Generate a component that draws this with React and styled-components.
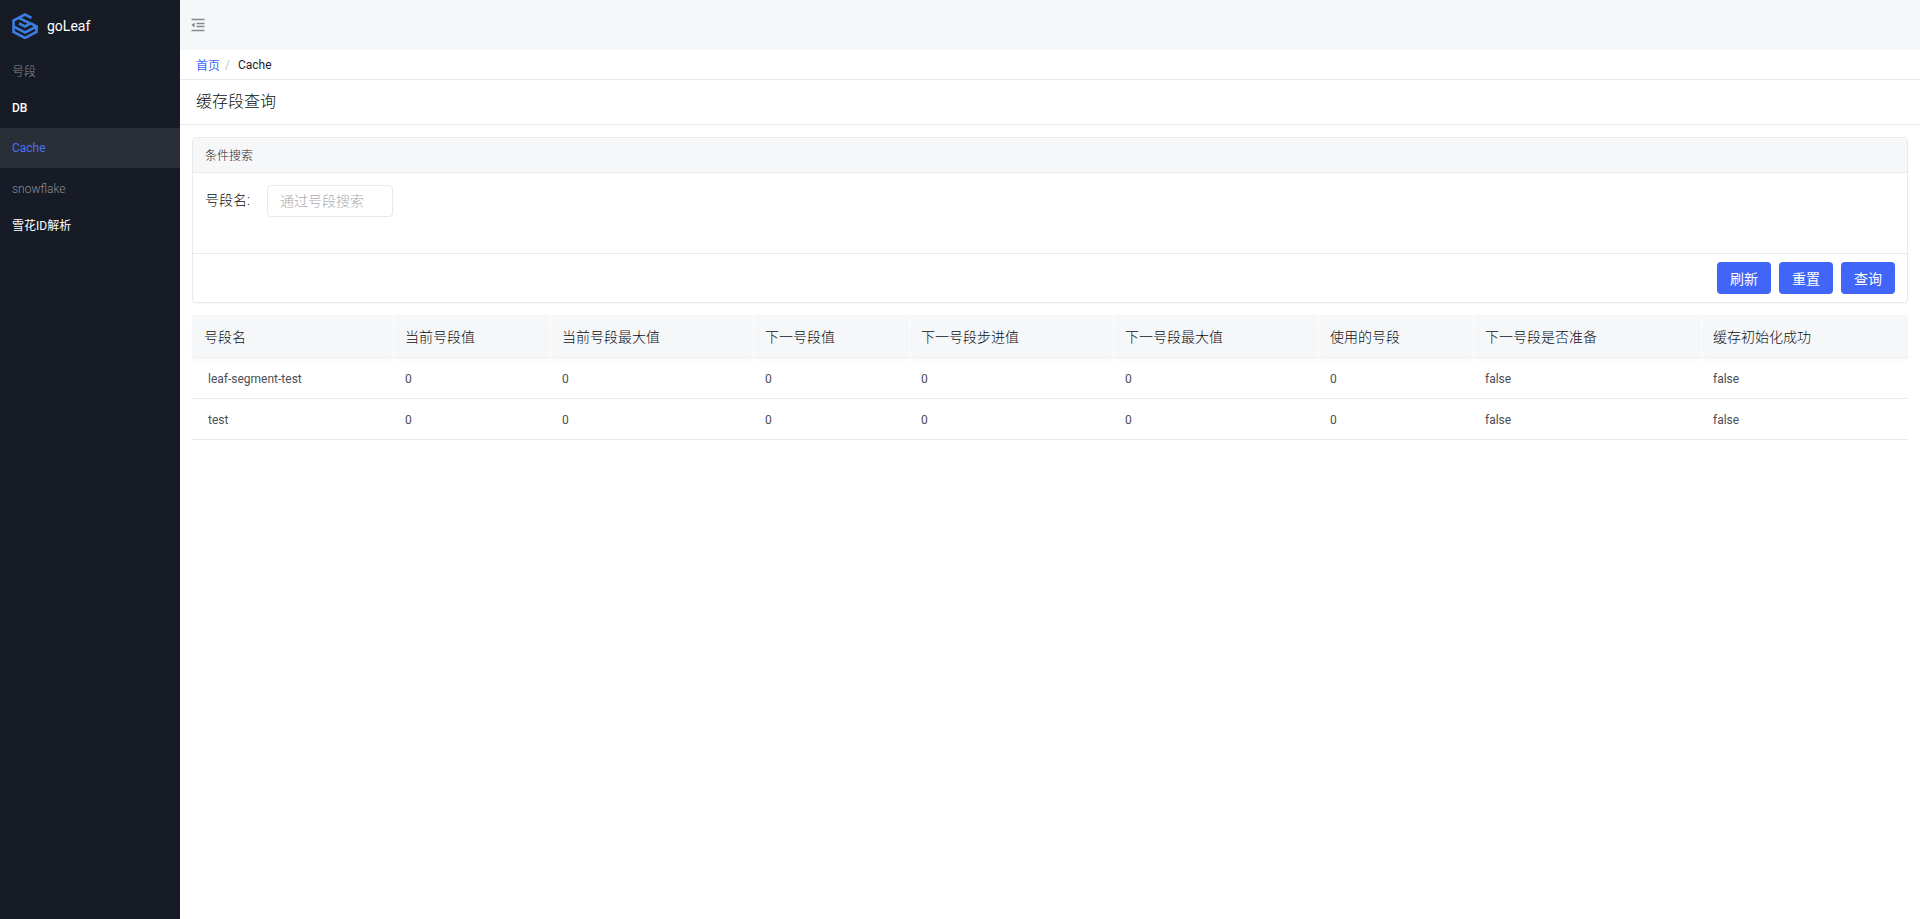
import React from 'react';
import styled, { createGlobalStyle } from 'styled-components';

const Global = createGlobalStyle`
  html, body {
    margin: 0;
    padding: 0;
    background: #fff;
    font-family: Roboto, "Noto Sans CJK SC", sans-serif;
    color: #1f2329;
  }
  * {
    box-sizing: border-box;
  }
`;

const columns = [
  { title: '号段名', width: 202, key: 'name' },
  { title: '当前号段值', width: 157, key: 'cur' },
  { title: '当前号段最大值', width: 203, key: 'curMax' },
  { title: '下一号段值', width: 156, key: 'next' },
  { title: '下一号段步进值', width: 204, key: 'step' },
  { title: '下一号段最大值', width: 205, key: 'nextMax' },
  { title: '使用的号段', width: 155, key: 'pos' },
  { title: '下一号段是否准备', width: 228, key: 'ready' },
  { title: '缓存初始化成功', width: 206, key: 'init' },
];

const rows = [
  { name: 'leaf-segment-test', cur: 0, curMax: 0, next: 0, step: 0, nextMax: 0, pos: 0, ready: 'false', init: 'false' },
  { name: 'test', cur: 0, curMax: 0, next: 0, step: 0, nextMax: 0, pos: 0, ready: 'false', init: 'false' },
];

function Logo() {
  return (
    <svg width="26" height="26" viewBox="0 0 26 26" fill="none" stroke="#3b7de0" strokeWidth="2.6" strokeLinejoin="miter">
      <path d="M1.5 13.5v5.5L13 25l11.5-6v-5.5" />
      <path d="M19 10.5l5.5 3L13 19.5 1.5 13.5V7.5L13 1.5l6.5 3.4" />
      <path d="M7 10.5l6 3 5.5-3L7 5" />
    </svg>
  );
}

function FoldIcon() {
  return (
    <svg width="14" height="14" viewBox="0 0 14 14" fill="none">
      <path d="M0.5 1.5h13M5.5 5.5h8M5.5 8.5h8M0.5 12.5h13" stroke="#85888e" strokeWidth="1.6" />
      <path d="M3.6 4.4v5.2L0.4 7z" fill="#85888e" />
    </svg>
  );
}

export default function App() {
  return (
    <Layout>
      <Global />
      <Sidebar>
        <Brand>
          <Logo />
          <BrandName>goLeaf</BrandName>
        </Brand>
        <GroupTitle>号段</GroupTitle>
        <MenuItem>DB</MenuItem>
        <MenuItem $active>Cache</MenuItem>
        <GroupTitle $spaced>snowflake</GroupTitle>
        <MenuItem $cjk>雪花ID解析</MenuItem>
      </Sidebar>
      <Main>
        <TopBar>
          <FoldIcon />
        </TopBar>
        <Breadcrumb>
          <CrumbLink>首页</CrumbLink>
          <CrumbSep>/</CrumbSep>
          <span>Cache</span>
        </Breadcrumb>
        <PageTitle>缓存段查询</PageTitle>
        <Content>
          <SearchCard>
            <CardHead>条件搜索</CardHead>
            <CardBody>
              <FieldLabel>号段名:</FieldLabel>
              <SearchInput placeholder="通过号段搜索" />
            </CardBody>
            <CardFoot>
              <PrimaryButton>刷新</PrimaryButton>
              <PrimaryButton>重置</PrimaryButton>
              <PrimaryButton>查询</PrimaryButton>
            </CardFoot>
          </SearchCard>
          <Table>
            <colgroup>
              {columns.map(c => (
                <col key={c.key} width={c.width} />
              ))}
            </colgroup>
            <thead>
              <tr>
                {columns.map(c => (
                  <Th key={c.key}>{c.title}</Th>
                ))}
              </tr>
            </thead>
            <tbody>
              {rows.map(r => (
                <tr key={r.name}>
                  {columns.map((c, i) => (
                    <Td key={c.key} $first={i === 0}>
                      {r[c.key]}
                    </Td>
                  ))}
                </tr>
              ))}
            </tbody>
          </Table>
        </Content>
      </Main>
    </Layout>
  );
}

const Layout = styled.div`
  display: flex;
  height: 919px;
  overflow: hidden;
`;

const Sidebar = styled.aside`
  width: 180px;
  flex: none;
  background: #161b26;
`;

const Brand = styled.div`
  display: flex;
  align-items: center;
  height: 50px;
  padding: 1px 0 0 12px;
`;

const BrandName = styled.span`
  margin-left: 9px;
  font-size: 14px;
  color: #fff;
`;

const GroupTitle = styled.div`
  display: flex;
  align-items: center;
  height: ${props => (props.$spaced ? '37px' : '38px')};
  padding: ${props => (props.$spaced ? '5px' : '3px')} 0 0 12px;
  font-size: 12px;
  font-weight: 300;
  color: #8a8d93;
`;

const MenuItem = styled.div`
  display: flex;
  align-items: center;
  height: 40px;
  padding: 0 0 ${props => (props.$cjk ? '2px' : '0')} 12px;
  font-size: 12px;
  font-weight: ${props => (props.$active || props.$cjk ? 400 : 500)};
  color: ${props => (props.$active ? '#4a72f5' : '#fff')};
  background: ${props => (props.$active ? '#292d35' : 'transparent')};
`;

const Main = styled.main`
  flex: 1;
  min-width: 0;
`;

const TopBar = styled.header`
  display: flex;
  align-items: center;
  height: 50px;
  padding: 0 0 0 11px;
  background: #f6f7f9;
`;

const Breadcrumb = styled.nav`
  display: flex;
  align-items: center;
  height: 30px;
  padding-left: 16px;
  font-size: 12px;
  color: #1f2329;
  border-bottom: 1px solid #e8e9eb;
`;

const CrumbLink = styled.a`
  color: #4165f6;
`;

const CrumbSep = styled.span`
  margin: 0 8px 0 5px;
  color: #c4c6cc;
`;

const PageTitle = styled.h1`
  display: flex;
  align-items: center;
  height: 45px;
  margin: 0;
  padding: 0 0 4px 16px;
  font-size: 16px;
  font-weight: 300;
  color: #0d0f12;
  border-bottom: 1px solid #e8e9eb;
`;

const Content = styled.div`
  padding: 12px 12px 0;
`;

const SearchCard = styled.section`
  height: 166px;
  display: flex;
  flex-direction: column;
  border: 1px solid #e8e9eb;
  border-radius: 4px;
  box-shadow: 0 1px 2px rgba(0, 0, 0, 0.04);
  overflow: hidden;
`;

const CardHead = styled.div`
  display: flex;
  align-items: center;
  height: 35px;
  padding: 0 0 1px 12px;
  font-size: 12px;
  font-weight: 300;
  color: #1f2329;
  background: #f6f7f9;
  border-bottom: 1px solid #e8e9eb;
`;

const CardBody = styled.div`
  display: flex;
  align-items: flex-start;
  height: 81px;
  padding: 12px 12px 0;
  border-bottom: 1px solid #e8e9eb;
`;

const FieldLabel = styled.label`
  width: 62px;
  line-height: 30px;
  font-size: 14px;
  font-weight: 300;
  color: #0d0f12;
`;

const SearchInput = styled.input`
  width: 126px;
  height: 32px;
  padding: 0 12px;
  font-family: inherit;
  font-size: 14px;
  font-weight: 300;
  border: 1px solid #e8e9eb;
  border-radius: 4px;
  outline: none;
  &::placeholder {
    color: #a9abb1;
  }
`;

const CardFoot = styled.div`
  flex: 1;
  display: flex;
  justify-content: flex-end;
  align-items: center;
  gap: 8px;
  padding-right: 12px;
`;

const PrimaryButton = styled.button`
  width: 54px;
  height: 32px;
  padding: 0;
  font-family: inherit;
  font-size: 14px;
  color: #fff;
  background: #4165f6;
  border: 0;
  border-radius: 4px;
`;

const Table = styled.table`
  width: 1716px;
  margin-top: 12px;
  border-collapse: separate;
  border-spacing: 0;
  table-layout: fixed;
`;

const Th = styled.th`
  height: 43px;
  padding: 0 11px;
  font-size: 14px;
  font-weight: 300;
  text-align: left;
  color: #0d0f12;
  background: #f6f7f9;
  border-right: 1px solid #fff;
  border-bottom: 1px solid #eef0f2;
  box-shadow: 0 4px 6px -2px rgba(0, 0, 0, 0.04);
  &:first-child {
    padding-left: 12px;
  }
  &:last-child {
    border-right: 0;
  }
`;

const Td = styled.td`
  height: 41px;
  padding: 2px 11px 0 ${props => (props.$first ? '16px' : '11px')};
  font-size: 12px;
  color: #4a4d54;
  border-bottom: 1px solid #e8e9eb;
`;
